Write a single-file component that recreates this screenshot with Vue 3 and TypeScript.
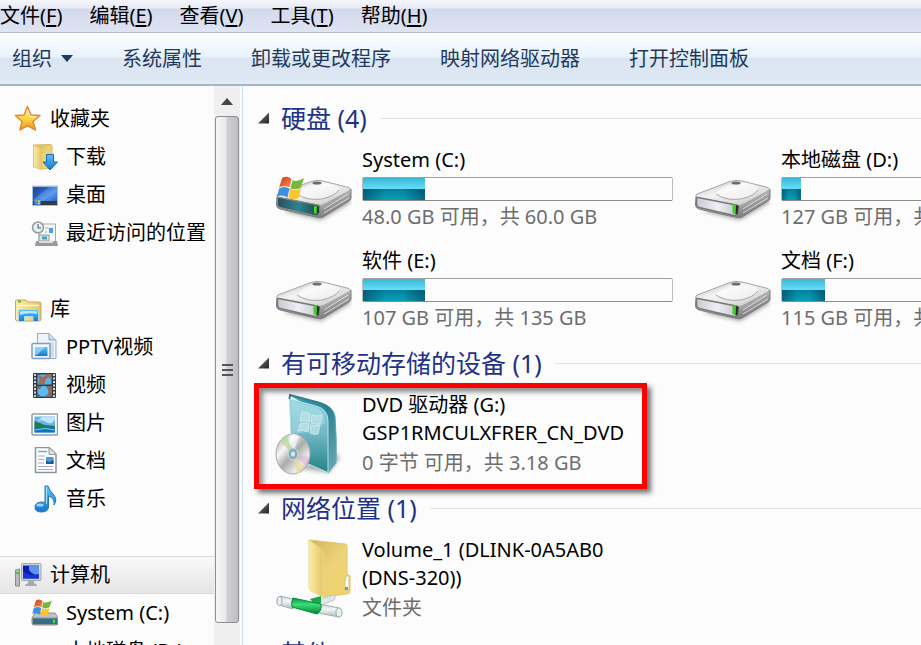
<script setup lang="ts">
import { ref } from 'vue'

interface MenuEntry { label: string; key: string }
interface NavItem { label: string; icon: string; child?: boolean }
interface Tile { icon: string; lines: string[]; note: string; used?: number; marked?: boolean }
interface Group { title: string; tiles: Tile[] }

const menus: MenuEntry[] = [
  { label: '文件', key: 'F' },
  { label: '编辑', key: 'E' },
  { label: '查看', key: 'V' },
  { label: '工具', key: 'T' },
  { label: '帮助', key: 'H' },
]

const commands = ['系统属性', '卸载或更改程序', '映射网络驱动器', '打开控制面板']

const sections: NavItem[][] = [
  [
    { label: '收藏夹', icon: 'star' },
    { label: '下载', icon: 'download', child: true },
    { label: '桌面', icon: 'desktop', child: true },
    { label: '最近访问的位置', icon: 'recent', child: true },
  ],
  [
    { label: '库', icon: 'library' },
    { label: 'PPTV视频', icon: 'pptv', child: true },
    { label: '视频', icon: 'film', child: true },
    { label: '图片', icon: 'picture', child: true },
    { label: '文档', icon: 'document', child: true },
    { label: '音乐', icon: 'music', child: true },
  ],
  [
    { label: '计算机', icon: 'computer' },
    { label: 'System (C:)', icon: 'sysdisk', child: true },
    { label: '本地磁盘 (D:)', icon: 'disk', child: true },
  ],
]

const groups: Group[] = [
  {
    title: '硬盘 (4)',
    tiles: [
      { icon: 'drive-system', lines: ['System (C:)'], used: 20, note: '48.0 GB 可用，共 60.0 GB' },
      { icon: 'drive', lines: ['本地磁盘 (D:)'], used: 6, note: '127 GB 可用，共 135 GB' },
      { icon: 'drive', lines: ['软件 (E:)'], used: 20, note: '107 GB 可用，共 135 GB' },
      { icon: 'drive', lines: ['文档 (F:)'], used: 14, note: '115 GB 可用，共 135 GB' },
    ],
  },
  {
    title: '有可移动存储的设备 (1)',
    tiles: [
      { icon: 'dvd', lines: ['DVD 驱动器 (G:)', 'GSP1RMCULXFRER_CN_DVD'], note: '0 字节 可用，共 3.18 GB', marked: true },
    ],
  },
  {
    title: '网络位置 (1)',
    tiles: [
      { icon: 'netfolder', lines: ['Volume_1 (DLINK-0A5AB0', '(DNS-320))'], note: '文件夹' },
    ],
  },
  { title: '其他 (1)', tiles: [] },
]

const selected = ref('计算机')
</script>

<template>
  <div class="explorer">
    <svg class="defs" aria-hidden="true">
      <defs>
        <linearGradient id="gStar" x1="0" y1="0" x2="0" y2="1"><stop offset="0" stop-color="#fff3a0" /><stop offset=".55" stop-color="#fcd23c" /><stop offset="1" stop-color="#f3952a" /></linearGradient>
        <linearGradient id="gFold" x1="0" y1="0" x2="1" y2="0"><stop offset="0" stop-color="#fbedac" /><stop offset="1" stop-color="#e3c566" /></linearGradient>
        <linearGradient id="gFoldBack" x1="0" y1="0" x2="1" y2="1"><stop offset="0" stop-color="#d4b45c" /><stop offset=".5" stop-color="#ecd27a" /><stop offset="1" stop-color="#f3d467" /></linearGradient>
        <linearGradient id="gBlue" x1="0" y1="0" x2="0" y2="1"><stop offset="0" stop-color="#5cc4fa" /><stop offset="1" stop-color="#1478c8" /></linearGradient>
        <linearGradient id="gDesk" x1="0" y1="0" x2="1" y2="1"><stop offset="0" stop-color="#1c4caa" /><stop offset=".6" stop-color="#5c9cf0" /><stop offset="1" stop-color="#2860c0" /></linearGradient>
        <linearGradient id="gTop" x1="0" y1="0" x2="1" y2="1"><stop offset="0" stop-color="#b4b4b4" /><stop offset=".4" stop-color="#f4f4f4" /><stop offset=".7" stop-color="#dedede" /><stop offset="1" stop-color="#b0b0b0" /></linearGradient>
        <linearGradient id="gSide" x1="0" y1="0" x2="1" y2="1"><stop offset="0" stop-color="#8a8a8a" /><stop offset=".35" stop-color="#d9d9d9" /><stop offset=".7" stop-color="#8d8d8d" /><stop offset="1" stop-color="#666" /></linearGradient>
        <linearGradient id="gFront" x1="0" y1="0" x2="1" y2="0"><stop offset="0" stop-color="#c9c9d2" /><stop offset=".5" stop-color="#eeeef8" /><stop offset="1" stop-color="#c4c4ce" /></linearGradient>
        <linearGradient id="gFrontSys" x1="0" y1="0" x2="1" y2="0"><stop offset="0" stop-color="#2b4e5c" /><stop offset=".5" stop-color="#2f8292" /><stop offset="1" stop-color="#1b4448" /></linearGradient>
        <linearGradient id="gCase" x1="0" y1="0" x2="0" y2="1"><stop offset="0" stop-color="#8bd2dd" /><stop offset=".45" stop-color="#76b9c6" /><stop offset="1" stop-color="#218583" /></linearGradient>
        <linearGradient id="gCaseSide" x1="0" y1="0" x2="1" y2="1"><stop offset="0" stop-color="#41a4b6" /><stop offset=".5" stop-color="#2c8093" /><stop offset="1" stop-color="#67adb5" /></linearGradient>
        <linearGradient id="gDisc" x1="0" y1="0" x2="1" y2="1"><stop offset="0" stop-color="#999" /><stop offset=".3" stop-color="#f7f7f7" /><stop offset=".5" stop-color="#aaa" /><stop offset=".75" stop-color="#eee" /><stop offset="1" stop-color="#8c8c8c" /></linearGradient>
        <linearGradient id="gTube" x1="0" y1="0" x2="0" y2="1"><stop offset="0" stop-color="#c9d4d7" /><stop offset=".4" stop-color="#f4f8f8" /><stop offset="1" stop-color="#a9b7ba" /></linearGradient>
        <linearGradient id="gGreen" x1="0" y1="0" x2="0" y2="1"><stop offset="0" stop-color="#0a8f3a" /><stop offset=".4" stop-color="#3bdc7c" /><stop offset="1" stop-color="#04822f" /></linearGradient>
        <linearGradient id="gRed" x1="0" y1="0" x2="1" y2="1"><stop offset="0" stop-color="#c4371a" /><stop offset="1" stop-color="#f79350" /></linearGradient>
        <filter id="soft" x="-20%" y="-20%" width="140%" height="150%"><feGaussianBlur stdDeviation="2" /></filter>
      </defs>

      <symbol id="flag" viewBox="0 0 26 24">
        <path d="M5 2Q10-1 14 3L12 11Q7 8 2 11Z" fill="url(#gRed)" />
        <path d="M15 4Q20 6 26 2L23 11Q18 14 13 11Z" fill="#76b83a" />
        <path d="M2 12Q7 9 12 12L10 21Q5 17 0 20Z" fill="#3f8fe0" />
        <path d="M13 12Q18 15 23 12L21 21Q16 24 11 21Z" fill="#fbc62c" />
      </symbol>

      <symbol id="star" viewBox="0 0 28 28">
        <path d="M13.500 1.500L17 10L26 10.500L19 16.500L21.500 25L13.500 20.500L6 25L8 16.500L1.500 10.500L10 10Z" fill="url(#gStar)" stroke="#e08a35" stroke-width="1.500" stroke-linejoin="round" />
        <path d="M13.500 5L16 11.500L22 12" fill="none" stroke="#fffbd8" stroke-width="1" />
      </symbol>

      <symbol id="download" viewBox="0 0 28 28">
        <path d="M4 2L20 1.500Q22 1.500 22 3V25L12 26Z" fill="url(#gFoldBack)" stroke="#d7bb62" />
        <path d="M3.500 2L11.500 5V26.500L3.500 24Z" fill="url(#gFold)" stroke="#dcc578" />
        <path d="M16.500 11.500H23.500V19H27.500L20 27L13 19H16.500Z" fill="url(#gBlue)" stroke="#176db4" stroke-linejoin="round" />
      </symbol>

      <symbol id="desktop" viewBox="0 0 28 28">
        <rect x="2" y="4.500" width="26" height="20.500" fill="#a9bfdc" />
        <rect x="3" y="6" width="24" height="15" fill="url(#gDesk)" />
        <path d="M3 6H19Q10 12 3 20Z" fill="#153e96" opacity=".5" />
        <rect x="3" y="20" width="24" height="4" fill="#333a42" />
        <circle cx="7.500" cy="21" r="3.500" fill="#3c8ed8" />
        <path d="M5.500 19H7.500V21H5.500Z" fill="#f07a3a" /><path d="M8 19H10V21H8Z" fill="#9ed45a" /><path d="M8 21.500H10V23H8Z" fill="#f7d043" />
      </symbol>

      <symbol id="recent" viewBox="0 0 28 28">
        <path d="M9 5H25.500V23H9Z" fill="#f8f8f8" stroke="#aaa" />
        <path d="M15 9H19M15 13H17" stroke="#b5c4d4" stroke-width="1.500" /><path d="M19 9H23V14H19Z" fill="#4a9be8" />
        <path d="M9 16H19V22H9Z" fill="#d9e4e4" stroke="#8e9c9c" /><path d="M12 17.500H17V20.500H12Z" fill="#4aa1b8" />
        <path d="M6 22H27L28 27H5Z" fill="#999" /><path d="M8 22H24L22 24H10Z" fill="#ddd" />
        <circle cx="8" cy="8.500" r="5.500" fill="#e9eef0" stroke="#8f9ca2" stroke-width="1.500" />
        <path d="M8 5V9H11" fill="none" stroke="#49596a" />
      </symbol>

      <symbol id="library" viewBox="0 0 28 28">
        <path d="M1.500 6Q1.500 5 3 5H12L14 7H25Q27 7 27 9V24Q27 26 25 26H3.500Q1.500 26 1.500 24Z" fill="url(#gFold)" stroke="#c9aa4e" />
        <path d="M4 6.500H7" stroke="#50b83c" stroke-width="2" /><path d="M4 10.500H25" stroke="#fff6c8" stroke-width="1.500" />
        <path d="M4.500 26.500V17Q4.500 14.500 7 14.500H22Q24.500 14.500 24.500 17V26.500H19V21.500H10.500V26.500Z" fill="url(#gBlue)" stroke="#a9ddf3" />
        <path d="M6 20V17.500Q6 16 8 16H21Q23 16 23 18V19Q14 17 6 20Z" fill="#b5e8fa" />
      </symbol>

      <symbol id="pptv" viewBox="0 0 28 28">
        <path d="M7.500 .500H19L26 7V25.500H7.500Z" fill="#edf3f9" stroke="#8fabc5" stroke-linejoin="round" />
        <path d="M19 .500V7H26" fill="#c9dae9" stroke="#8fabc5" /><path d="M18 9H24V24H18Z" fill="#cedeed" />
        <rect x="2" y="10.500" width="18" height="15" rx="1" fill="#edf6ff" stroke="#819fbe" stroke-width="1.500" />
        <rect x="5" y="14" width="12.500" height="9" fill="url(#gBlue)" /><path d="M5 14H15L7 22H5Z" fill="#a6dcfc" opacity=".7" />
      </symbol>

      <symbol id="film" viewBox="0 0 28 28">
        <rect x="3" y="2" width="23" height="25" rx="1" fill="#343b42" />
        <path d="M5 3V26M24 3V26" stroke="#d3dcdc" stroke-width="2" stroke-dasharray="2 1.500" />
        <rect x="7.500" y="3.500" width="14" height="10" fill="#50b4f0" /><rect x="7.500" y="15" width="14" height="10.500" fill="#5bbcf5" />
        <path d="M7.500 3.500Q11 10 8 13H15Q14 8 19 6L21.500 9V3.500H17L13 6Z" fill="#a66a54" />
        <path d="M7.500 15H12L10 18H7.500ZM16 15H21.500V25.500H14Q20 23 18 19Z" fill="#8a665d" /><path d="M7.500 22L11 25.500H7.500Z" fill="#486f77" />
      </symbol>

      <symbol id="picture" viewBox="0 0 28 28">
        <rect x="2" y="5" width="25.500" height="21" rx="1" fill="#fff" stroke="#929da3" stroke-width="1.500" />
        <rect x="4.500" y="7.500" width="20.500" height="16" fill="#62b5f2" />
        <path d="M5 14Q10 9 16 13T25 10V8H12Z" fill="#d9f1fd" opacity=".8" />
        <path d="M4.500 12L15 16L25 17V20H4.500Z" fill="#277a45" /><path d="M4.500 19Q14 17 25 18V23.500H4.500Z" fill="#1374b5" /><path d="M5 21Q15 18 25 21" stroke="#69d5e9" fill="none" />
      </symbol>

      <symbol id="document" viewBox="0 0 28 28">
        <path d="M5.500 .500H19L26 7V25.500H5.500Z" fill="#fff" stroke="#8d959b" stroke-width="1.500" stroke-linejoin="round" />
        <path d="M19 1V7.500H26" fill="#dce2e8" stroke="#8d959b" />
        <path d="M8 4.500H17" stroke="#65b1bd" stroke-width="1.500" /><path d="M8 9H15M8 12.500H14M8 16H14M8 19.500H23M8 22.500H23" stroke="#a4a7d0" />
        <rect x="16" y="10" width="7.500" height="7" fill="#469ee2" /><path d="M16 14L20 15L23.500 12.500V17H16Z" fill="#1c5a8c" />
      </symbol>

      <symbol id="music" viewBox="0 0 28 28">
        <path d="M15 1H18Q19 5 23 9Q28 14 24 20Q25 13 18.500 11V22Q18 27 11.500 27Q5 27 5 22.500Q5 17.500 11 17Q14 17 15 18Z" fill="url(#gBlue)" stroke="#2c79b8" />
        <path d="M16.500 2V19" stroke="#a6e0fb" stroke-width="1" /><ellipse cx="10" cy="20" rx="3.500" ry="1.500" fill="#b5e9ff" opacity=".8" />
      </symbol>

      <symbol id="computer" viewBox="0 0 28 28">
        <path d="M1.500 9L5.500 8V25H1.500Z" fill="#b8bcbf" stroke="#858b90" /><path d="M2 12H5" stroke="#54bd50" stroke-width="2" />
        <path d="M14 19H20V22L23 24V25H11V24L14 22Z" fill="#a6abb0" />
        <rect x="7.500" y="2.500" width="19.500" height="17" rx="1" fill="#d3d7da" stroke="#a1a7ad" />
        <rect x="9" y="4.500" width="16" height="13" fill="#0b1bb6" /><path d="M15 4.500H25V14Q18 14 15 9Z" fill="#5f93ee" /><path d="M9 10Q15 16 25 13V17.500H9Z" fill="#1738cd" />
      </symbol>

      <symbol id="sysdisk" viewBox="0 0 28 28">
        <path d="M5 14H25L28 19V24Q28 26 26 26H4Q2 26 2 24V19Z" fill="#bfc2c4" stroke="#8b9092" />
        <rect x="2.500" y="19" width="25" height="6.500" rx="1" fill="#356f86" stroke="#8b9599" /><path d="M24 20.500V24" stroke="#4be23c" stroke-width="2" />
        <use href="#flag" x="2" y="0" width="20" height="18" />
      </symbol>

      <symbol id="disk" viewBox="0 0 28 28">
        <path d="M5 11H25L28 19V24Q28 26 26 26H4Q2 26 2 24V19Z" fill="#d8dadc" stroke="#8b9092" />
        <path d="M2 19H28" stroke="#9aa0a4" /><path d="M24 21V24" stroke="#4be23c" stroke-width="2" />
      </symbol>

      <symbol id="drive" viewBox="0 0 77 85">
        <path d="M8 65L46 74L76 56L70 50Z" fill="#000" opacity=".35" filter="url(#soft)" />
        <path d="M2 51L45 59L76 43V52Q76 54 74 55L48 71Q46 72 43 71.500L5 63Q1.500 62 1.500 59Z" fill="url(#gSide)" stroke="#7c7c7c" />
        <path d="M3 48L36 35.500Q42 33.500 48 35L74 41.500Q77 43 74 45L49 58.500Q46 60 42 59L4 52Q0 50 3 48Z" fill="url(#gTop)" stroke="#a5a5a5" />
        <path d="M22 48Q32 55 47 53Q60 50 64 44Q64 39 55 38Q42 36 32 40Q23 44 22 48Z" fill="#fff" opacity=".5" />
        <path d="M22 48Q32 55 47 53Q60 50 64 44" fill="none" stroke="#a6a6a6" />
        <ellipse cx="42" cy="37" rx="4.500" ry="1.500" fill="#6c6c6c" />
        <path d="M49 63L73 48M49 67L74 52" stroke="#efefef" opacity=".75" />
        <path d="M4 51.500L42 59Q45 60 44.500 62L43.500 68Q43 70 40 69.500L5 61.500Q2.500 61 2.500 58V53Q2.500 51 4 51.500Z" fill="url(#gFront)" stroke="#777" stroke-width="1.500" />
        <path d="M38.500 58.500H42L41.500 68L38.500 67Z" fill="#42cf1f" /><path d="M42 59L44.500 60L43.500 68L41.500 68.500Z" fill="#20351c" />
      </symbol>

      <symbol id="drive-system" viewBox="0 0 77 85">
        <use href="#drive" width="77" height="85" />
        <path d="M4 51.500L42 59Q45 60 44.500 62L43.500 68Q43 70 40 69.500L5 61.500Q2.500 61 2.500 58V53Q2.500 51 4 51.500Z" fill="url(#gFrontSys)" stroke="#8b8b8b" />
        <path d="M39 60L42 60.500L41.500 68L39 67.500Z" fill="#48d824" /><path d="M42.500 61L43.500 67" stroke="#10280c" />
        <use href="#flag" x="2" y="30" width="27" height="25" />
      </symbol>

      <symbol id="dvd" viewBox="0 0 77 85">
        <path d="M22 77L54 82L65 66L60 62Z" fill="#000" opacity=".3" filter="url(#soft)" />
        <path d="M15 4L45 12Q58 15 60 25Q62 50 61 72L53 82L48 24Z" fill="url(#gCaseSide)" stroke="#5fa9b6" />
        <path d="M14.500 8L41 15Q53 18 53 30V81.500L17 66Z" fill="url(#gCase)" stroke="#b4e2e8" />
        <path d="M14.500 8L15 4L45 12Q55 15 57 23" fill="none" stroke="#307f92" stroke-width="2" />
        <path d="M16 10L40 16Q50 19 50 32Q30 44 17 43Z" fill="#d5f4f8" opacity=".3" />
        <path d="M27 21Q31 20 35 23L34 31Q30 29 25 30ZM37 24Q41 26 47 24L45 33Q40 34 36 32ZM25 33Q30 31 34 33L33 41Q28 38 23 40ZM36 34Q40 36 45 34L43 43Q39 44 35 42Z" fill="#b9dfe6" stroke="#d1eef2" opacity=".85" />
        <ellipse cx="18" cy="63" rx="17" ry="20" fill="url(#gDisc)" stroke="#a9a9a9" />
        <path d="M18 63L5 50Q8 45 12 44Z" fill="#b0d99a" opacity=".7" /><path d="M18 63L22 83Q27 81 29 77Z" fill="#eadb8c" opacity=".7" /><path d="M18 63L34 66Q34 72 31 75Z" fill="#dba4d1" opacity=".45" />
        <path d="M18 63L15 43.500Q20 42 24 45Z" fill="#fff" opacity=".6" />
        <ellipse cx="18" cy="63" rx="5" ry="6" fill="#86aeb5" stroke="#cfdfe2" /><ellipse cx="18" cy="63" rx="2" ry="2.500" fill="#d6ecef" />
      </symbol>

      <symbol id="netfolder" viewBox="0 0 77 85">
        <path d="M34 4L70 8Q72 8 72 10V38L75 40V55Q75 58 71 58L48 61L40 50Z" fill="url(#gFoldBack)" stroke="#dfc468" />
        <path d="M71 40H74V54H70V46Z" fill="#fff" stroke="#dcc071" /><path d="M70 51H73V54H70Z" fill="#5b9ed6" />
        <path d="M34 4L46 13Q48 14 48 17V61L36 55Q34 54 34 51Z" fill="url(#gFold)" stroke="#ecd98b" />
        <path d="M40 65L58 59Q62 60 59 64L44 70Z" fill="#dfe7e8" stroke="#bccacc" />
        <path d="M35 63L46 60V67L40 69Z" fill="#16a94a" />
        <path d="M5 60L18 63V73L4 69Q0 64 5 60Z" fill="url(#gTube)" stroke="#a2b2b5" />
        <path d="M44 68L64 72Q68 76 64 81L43 77Z" fill="url(#gTube)" stroke="#a2b2b5" />
        <path d="M18 62Q16 65 17 71L42 78Q47 75 46 68Z" fill="url(#gGreen)" stroke="#078b38" />
        <ellipse cx="4.500" cy="65" rx="2.500" ry="4.500" fill="#e9f0f0" stroke="#95a7aa" /><ellipse cx="64" cy="76.500" rx="3" ry="4.500" fill="#e7eeee" stroke="#95a7aa" />
      </symbol>
    </svg>

    <header>
      <nav class="menubar" aria-label="菜单栏">
        <button v-for="m in menus" :key="m.key" type="button">{{ m.label }}(<u>{{ m.key }}</u>)</button>
      </nav>
      <div class="toolbar" role="toolbar">
        <button type="button">组织<span class="caret"></span></button>
        <button v-for="c in commands" :key="c" type="button">{{ c }}</button>
      </div>
    </header>

    <div class="body">
      <nav class="tree" aria-label="导航窗格">
        <ul v-for="(items, i) in sections" :key="i">
          <li v-for="item in items" :key="item.label">
            <a href="#" :class="{ child: item.child, selected: item.label === selected }" @click.prevent="selected = item.label">
              <svg class="small-icon" aria-hidden="true"><use :href="'#' + item.icon" /></svg>
              <span>{{ item.label }}</span>
            </a>
          </li>
        </ul>
      </nav>

      <div class="scrollbar">
        <button class="scroll-up" type="button" aria-label="向上滚动"><span class="arrow"></span></button>
        <div class="thumb"><i></i><i></i><i></i></div>
      </div>

      <main>
        <section v-for="g in groups" :key="g.title">
          <h2><button type="button"><span class="fold"></span>{{ g.title }}</button></h2>
          <div v-if="g.tiles.length" class="tiles">
            <article v-for="t in g.tiles" :key="t.lines[0]" class="tile">
              <svg class="large-icon" aria-hidden="true"><use :href="'#' + t.icon" /></svg>
              <div class="info">
                <div v-for="line in t.lines" :key="line" class="name">{{ line }}</div>
                <div v-if="t.used" class="meter" role="meter" :aria-valuenow="t.used" aria-valuemin="0" aria-valuemax="100" :aria-label="t.lines[0]">
                  <div class="fill" :style="{ width: t.used + '%' }"></div>
                </div>
                <div class="note">{{ t.note }}</div>
              </div>
              <div v-if="t.marked" class="marker"></div>
            </article>
          </div>
        </section>
      </main>
    </div>
  </div>
</template>

<style>
body {
  background: #fcfcfc;
  overflow: hidden;
}
</style>

<style scoped>
.explorer {
  display: flex;
  flex-direction: column;
  height: 100vh;
  overflow: hidden;
  background: #fcfcfc;
  color: #000;
  font: 20px/28px "Noto Sans", "Noto Sans CJK SC", sans-serif;
}
.defs {
  position: absolute;
  width: 0;
  height: 0;
}
button {
  padding: 0;
  border: 0;
  background: none;
  color: inherit;
  font: inherit;
  white-space: nowrap;
}
.menubar {
  display: flex;
  gap: 27px;
  height: 32px;
  border-bottom: 1px solid #b3b8cd;
  background: linear-gradient(#f4f6fb, #e6eaf4 8px, #d4daec 9px, #dfe4f3);
}
.menubar u {
  text-underline-offset: 2px;
}
.toolbar {
  display: flex;
  gap: 49px;
  height: 51px;
  padding-left: 12px;
  border-bottom: 2px solid #a6b6c9;
  background: linear-gradient(#fdfeff, #e8f2fb 24px, #dce6f3 25px, #dce7f4 46px, #e2edf8);
  color: #1e395b;
}
.toolbar button {
  display: flex;
  align-items: center;
  gap: 9px;
}
.caret {
  border: 6px solid transparent;
  border-top: 7px solid #1e395b;
  border-bottom: 0;
}
.body {
  display: flex;
  flex: 1;
  min-height: 0;
}
.tree {
  flex: 0 0 214px;
  padding-top: 14px;
  overflow: hidden;
}
.tree ul {
  margin: 0 0 38px;
  padding: 0;
  list-style: none;
}
.tree li {
  height: 38px;
}
.tree a {
  display: flex;
  align-items: center;
  gap: 8px;
  height: 36px;
  padding-left: 14px;
  border: 1px solid transparent;
  border-width: 1px 0;
  color: #000;
  text-decoration: none;
  white-space: nowrap;
}
.tree a.child {
  padding-left: 30px;
}
.tree a.selected {
  border-color: #d9d9d9;
  background: linear-gradient(#f8f8f8, #e5e5e5);
}
.small-icon {
  flex: none;
  width: 28px;
  height: 28px;
}
.scrollbar {
  display: flex;
  flex: 0 0 26px;
  flex-direction: column;
  padding-bottom: 22px;
  background: #efefef;
}
.scroll-up {
  display: grid;
  place-items: center;
  height: 30px;
}
.arrow {
  border: 6px solid transparent;
  border-bottom: 7px solid #444;
  border-top: 0;
}
.thumb {
  display: flex;
  flex: 1;
  flex-direction: column;
  align-items: center;
  justify-content: center;
  gap: 3px;
  margin: 0 1px;
  border: 1px solid #8e8e8e;
  border-radius: 3px;
  background: linear-gradient(90deg, #f7f7f7, #e9e9eb 45%, #cfcfd3 50%, #bcbcc2);
}
.thumb i {
  width: 11px;
  height: 2px;
  background: #555;
}
main {
  flex: 1;
  min-width: 0;
  margin-left: 2px;
  padding-top: 14px;
  border-left: 1px solid #cfe0f2;
  overflow: hidden;
}
h2 {
  display: flex;
  align-items: center;
  gap: 13px;
  margin: 0;
  padding-left: 15px;
  color: #1e3287;
  font-size: 25px;
  font-weight: 400;
  line-height: 36px;
}
h2::after {
  flex: 1;
  height: 1px;
  background: #e2e2e2;
  content: "";
}
h2 button {
  display: flex;
  align-items: center;
  gap: 12px;
}
.fold {
  width: 11px;
  height: 11px;
  background: linear-gradient(135deg, #777, #222);
  clip-path: polygon(100% 0, 100% 100%, 0 100%);
}
.tiles {
  display: grid;
  grid-template-columns: repeat(2, 398px);
  gap: 16px 21px;
  padding: 10px 0 13px 32px;
}
.tile {
  position: relative;
  display: flex;
  gap: 10px;
}
.large-icon {
  flex: none;
  width: 77px;
  height: 85px;
}
.info {
  flex: 1;
  min-width: 0;
  white-space: nowrap;
}
.meter {
  box-sizing: border-box;
  height: 24px;
  margin: 3px 0 2px;
  border: 1px solid #b0b0b0;
  border-color: #a0a0a0 #bcbcbc #8c8c8c;
  border-radius: 2px;
  background: #fdfdfd;
}
.fill {
  height: 100%;
  background:
    linear-gradient(90deg, rgb(0 50 75 / 50%), transparent 35%, transparent 65%, rgb(0 50 75 / 50%)) bottom / 100% 50% no-repeat,
    linear-gradient(#39b8d8, #67dcf6 48%, #067f9a 50%, #079fb9);
}
.note {
  color: #6d6d6d;
}
.name + .name + .note {
  margin-top: 2px;
}
.marker {
  position: absolute;
  inset: -8px 26px -12px -21px;
  border: 5px solid #fb0000;
  box-shadow: 4px 4px 5px rgb(0 0 0 / 55%), inset 4px 4px 5px rgb(0 0 0 / 45%);
  pointer-events: none;
}
</style>
